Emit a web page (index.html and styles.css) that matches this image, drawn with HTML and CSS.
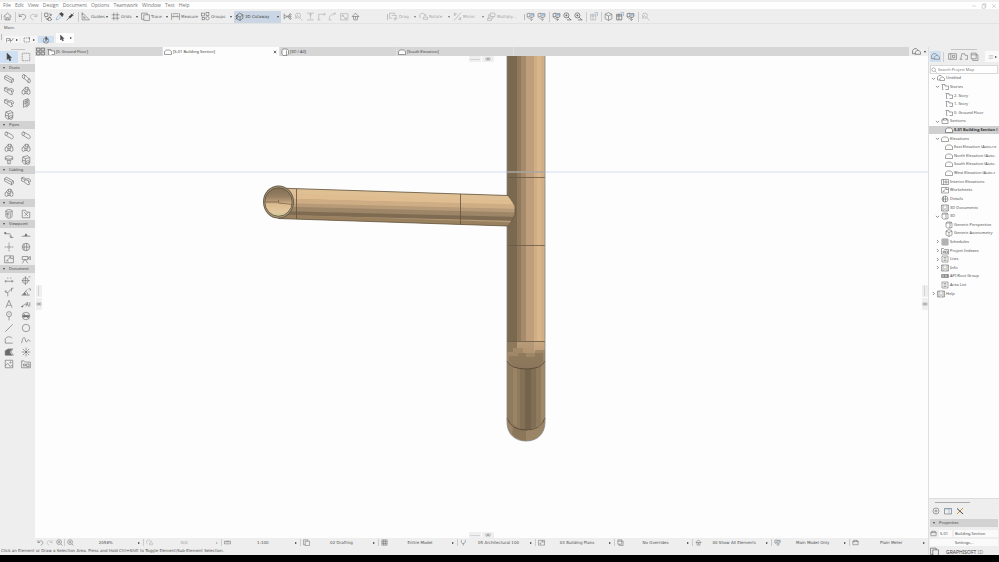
FILE: index.html
```html
<!DOCTYPE html>
<html lang="en">
<head>
<meta charset="utf-8">
<title>Untitled</title>
<link rel="stylesheet" href="styles.css">
</head>
<body>
<svg class="sprite" aria-hidden="true">
  <symbol id="home" viewBox="0 0 16 16"><path d="M1 8l7-6 7 6M3.500 7v7h9V7M6.500 14v-4h3v4"/></symbol>
  <symbol id="undo" viewBox="0 0 16 16"><path d="M2 3v5h5M2.500 8C5 3 13 3 13.500 8c.3 3-2 5-5 6"/></symbol>
  <symbol id="redo" viewBox="0 0 16 16"><path d="M14 3v5H9M13.500 8C11 3 3 3 2.500 8c-.3 3 2 5 5 6"/></symbol>
  <symbol id="find" viewBox="0 0 16 16"><rect x="1" y="2" width="6" height="6" rx="1"/><path d="M9 3l5 2-4 2M3 10l3 4 2-4M10 8l4 6M11 10a3 3 0 102 3"/></symbol>
  <symbol id="dropper" viewBox="0 0 16 16"><path class="blue" d="M2 14l1-4 6-6 3 3-6 6z"/><path class="solid" d="M8 3l5 5 2-4-3-3z"/></symbol>
  <symbol id="syringe" viewBox="0 0 16 16"><path class="solid" d="M5 9l5-5 2 2-5 5z"/><path d="M1 15l5-5M9 3l4 4M11 5l3-3"/></symbol>
  <symbol id="guides" viewBox="0 0 16 16"><path d="M2 1v13h13zM5 8v3h3zM1 4h3"/></symbol>
  <symbol id="grids" viewBox="0 0 16 16"><path d="M5 1v14M11 1v14M1 5h14M1 11h14"/></symbol>
  <symbol id="trace" viewBox="0 0 16 16"><path d="M5 13H1V2h10v3M5 5h10v10H5z"/></symbol>
  <symbol id="measure" viewBox="0 0 16 16"><path d="M1 2v12M15 2v12M3 8h10M5 6L3 8l2 2M11 6l2 2-2 2M3 3h10"/></symbol>
  <symbol id="groups" viewBox="0 0 16 16"><rect x="1" y="2" width="5" height="5"/><rect x="9" y="1" width="5" height="5"/><rect x="2" y="10" width="4" height="4"/><circle cx="11.500" cy="11" r="3"/></symbol>
  <symbol id="cutaway" viewBox="0 0 16 16"><path d="M3 6l5-4 6 3v6l-5 4-6-3zM3 6l6 3 5-4M9 9v6M1 9l4-4M1 13l5-4"/></symbol>
  <symbol id="scissors" viewBox="0 0 16 16"><path d="M2 3v10M2 5l10 6M2 11l10-6M9 8h6"/><circle cx="13" cy="4.500" r="1.500"/><circle cx="13" cy="11.500" r="1.500"/></symbol>
  <symbol id="lens" viewBox="0 0 16 16"><circle cx="7" cy="6.500" r="4.500"/><path d="M10 10l5 5M2 12l4-6 3 3"/></symbol>
  <symbol id="adjust" viewBox="0 0 16 16"><path d="M2 2h12M8 3v9M2 14h12M6 6l2-3 2 3"/></symbol>
  <symbol id="corner" viewBox="0 0 16 16"><path d="M3 14V4h11M6 14H1M12 2l3 2-3 2"/></symbol>
  <symbol id="fillet" viewBox="0 0 16 16"><path d="M2 14c0-7 4-11 12-12M2 14h4M10 6l4-4"/></symbol>
  <symbol id="resize" viewBox="0 0 16 16"><path d="M1 3h13v11H1zM4 6l7 6M4 9V6h3M8 12h3V9"/></symbol>
  <symbol id="explode" viewBox="0 0 16 16"><path d="M2 8l6-6 6 6zM4 8l1 6h6l1-6M8 8v4"/></symbol>
  <symbol id="drag" viewBox="0 0 16 16"><path d="M5 11H1V2h9v3M5 6h8v4M11 9v6M8 12h7"/></symbol>
  <symbol id="rotate" viewBox="0 0 16 16"><path d="M3 11a5 5 0 118-5M8 9h7v4H8zM9 5l2 2 2-3"/></symbol>
  <symbol id="mirror" viewBox="0 0 16 16"><path d="M14 1L2 15M2 2l4 1-3 4zM14 14l-4-1 3-4z"/></symbol>
  <symbol id="multiply" viewBox="0 0 16 16"><path d="M6 2h8v6H6zM6 5H3v6h8V8M4 11H1v4h7v-3"/></symbol>
  <symbol id="stack" viewBox="0 0 16 16"><path d="M2 3l5-1v6L2 9zM8 3h6v5l-3 2-4-1M9 10v5l3-2M4 10l3 3"/><path class="blue" d="M9 4h4v3H9z"/></symbol>
  <symbol id="zoomin" viewBox="0 0 16 16"><circle cx="6" cy="6" r="4.500"/><path d="M9 9l5 5M4 6h4M6 4v4M7 14h8"/></symbol>
  <symbol id="magnify" viewBox="0 0 16 16"><circle cx="7" cy="7" r="5.500"/><path d="M11 11l4 4M4.500 7h5M7 4.500v5"/></symbol>
  <symbol id="cube" viewBox="0 0 16 16"><path d="M2 4l6-3 6 3v8l-6 3-6-3zM2 4l6 3 6-3M8 7v8"/></symbol>
  <symbol id="solidbox" viewBox="0 0 16 16"><path class="paper" d="M2 5l2-3h8l3 3v7l-3 3H4l-2-3z"/><path d="M11 5v9"/></symbol>
  <symbol id="docblue" viewBox="0 0 16 16"><path d="M3 4h9v10H3zM3 7h9M7 4v10"/><path class="blue" d="M10 1h5v6"/></symbol>
  <symbol id="arrow" viewBox="0 0 16 16"><path class="solid" d="M5 2v10l2-2 2 4 2-1-2-4h3z"/></symbol>
  <symbol id="marquee" viewBox="0 0 16 16"><path stroke-dasharray="2 1" d="M2 2h12v12H2z"/></symbol>
  <symbol id="geom" viewBox="0 0 16 16"><path d="M1 13V5h6v4H3M9 13V5M9 9h3l3-5"/></symbol>
  <symbol id="box" viewBox="0 0 16 16"><path stroke-dasharray="3 1" d="M2 4h11v8H2z"/><path d="M11 2l3 2-2 2"/></symbol>
  <symbol id="compass" viewBox="0 0 16 16"><circle cx="8" cy="9" r="5.500"/><path class="solid" d="M8 1l3 6H7z"/><path d="M5 13l3-5 3 5"/></symbol>
  <symbol id="quad" viewBox="0 0 16 16"><path d="M1 2h6v5H1zM9 2h6v5H9zM1 9h6v5H1zM9 9h6v5H9z"/></symbol>
  <symbol id="story" viewBox="0 0 16 16"><path class="paper" d="M3 14V6h12v8z" stroke="none"/><path d="M5 13H3V3H1M3 3h5v3h7v7H9"/></symbol>
  <symbol id="house" viewBox="0 0 16 16"><path class="paper" d="M1 13V7l4-3h6l4 3v6z"/></symbol>
  <symbol id="houses" viewBox="0 0 16 16"><path d="M1 12V6l3-3h4l2 2M6 13V9l3-3h3l3 3v4zM1 12h5"/></symbol>
  <symbol id="section" viewBox="0 0 16 16"><path d="M2 13V6h12v7zM1 6l4-3h6l4 3M5 3v3M11 3v3"/></symbol>
  <symbol id="duct" viewBox="0 0 16 16"><path d="M1 4l3-2 11 6v4l-3 2L1 8zM1 4l11 6v4M12 10l3-2"/></symbol>
  <symbol id="bend" viewBox="0 0 16 16"><ellipse cx="4" cy="4" rx="2" ry="3"/><path d="M4 1c4 0 5 5 10 7M4 7c3 0 5 5 8 7"/><ellipse cx="13" cy="11" rx="2" ry="3"/></symbol>
  <symbol id="tee" viewBox="0 0 16 16"><path d="M1 3l3-1 4 3 4-1 3 2v3l-3 1 2 3-3 1-7-5-3-1zM1 3l5 3 6 1M6 6v3M12 7v3"/></symbol>
  <symbol id="joint" viewBox="0 0 16 16"><ellipse cx="4" cy="10" rx="2.500" ry="3.500"/><ellipse cx="12" cy="10" rx="2.500" ry="3.500"/><path d="M3 7l4-5h4l3 5M7 2v4h4V2M6 9h4M6 12h4"/></symbol>
  <symbol id="plate" viewBox="0 0 16 16"><path d="M4 4l7-3v10l-7 4zM4 7l7-3M4 10l7-3M8 2v10M11 2l2 1v8l-5 4"/></symbol>
  <symbol id="pipe" viewBox="0 0 16 16"><ellipse cx="3.500" cy="4.500" rx="2" ry="3"/><path d="M4 1.500l9 5M4 7.500l8 5M13 6.500c3 2 2 6-1 6"/></symbol>
  <symbol id="flange" viewBox="0 0 16 16"><path d="M2 3c4-2 8-2 12 0v4c-4 2-8 2-12 0zM6 8v6h4V8M2 5c4 2 8 2 12 0"/></symbol>
  <symbol id="device" viewBox="0 0 16 16"><path d="M3 3l8-2 3 3v7l-8 4-4-4zM3 3l4 3 7-2M7 6v8M2 9h5"/><circle cx="11" cy="12" r="3"/></symbol>
  <symbol id="tank" viewBox="0 0 16 16"><ellipse cx="8" cy="3" rx="5" ry="2"/><path d="M3 3v8c0 5 10 5 10 0V3M6 6v7M10 6v7M3 8h5"/></symbol>
  <symbol id="frame" viewBox="0 0 16 16"><path d="M2 14V2h5l2 3h5v9zM5 5l6 6M11 6l-5 5"/></symbol>
  <symbol id="sect" viewBox="0 0 16 16"><path class="solid" d="M1 4h2v2H1z"/><path d="M3 6h7M10 7v5h5M12 9v3"/></symbol>
  <symbol id="elev" viewBox="0 0 16 16"><path d="M1 10h14"/><path class="solid" d="M6 9l2-3 2 3z"/></symbol>
  <symbol id="interior" viewBox="0 0 16 16"><circle cx="8" cy="8" r="2"/><path d="M8 1v3M8 12v3M1 8h3M12 8h3"/></symbol>
  <symbol id="ball" viewBox="0 0 16 16"><circle cx="8" cy="8" r="6"/><path d="M2 8h12M5 3v10M9 2v12"/></symbol>
  <symbol id="sheet" viewBox="0 0 16 16"><path d="M1 3h14v11H1zM4 11l6-6M4 11h3M10 3v4h5"/></symbol>
  <symbol id="camera" viewBox="0 0 16 16"><path d="M2 4h9v5H2zM11 6l4-2v5l-4-2M6 9l-4 6M7 9l4 6"/></symbol>
  <symbol id="dim" viewBox="0 0 16 16"><path d="M1 10h14M3 8v4M13 8v4M5 5h2M10 5h2"/></symbol>
  <symbol id="target" viewBox="0 0 16 16"><circle cx="7" cy="9" r="4.500"/><path d="M7 2v14M1 9h13M12 3h3"/></symbol>
  <symbol id="radial" viewBox="0 0 16 16"><path d="M1 7l5 2 6-6M6 9v6M3 5v4M12 7V2h3"/></symbol>
  <symbol id="angle" viewBox="0 0 16 16"><path d="M1 13h13M2 13l8-9M7 7c3 1 4 3 4 6M12 3h3v3"/><path class="solid" d="M4 12l2-3 2 3z"/></symbol>
  <symbol id="letter" viewBox="0 0 16 16"><path d="M3 14L8 2l5 12M5 10h6"/></symbol>
  <symbol id="label" viewBox="0 0 16 16"><path d="M2 12l4-4h2M8 12l2-7 2 7M9 9h2M14 5v7"/><circle class="solid" cx="2" cy="12" r="1"/></symbol>
  <symbol id="pin" viewBox="0 0 16 16"><circle cx="8" cy="5" r="4"/><path d="M8 9v6M8 4v2"/></symbol>
  <symbol id="change" viewBox="0 0 16 16"><circle cx="8" cy="8" r="6"/><path class="solid" d="M3 7h10l-1 3-4-1-4 1z"/><path d="M4 4l8 8"/></symbol>
  <symbol id="line" viewBox="0 0 16 16"><path d="M2 14L14 2"/></symbol>
  <symbol id="circle" viewBox="0 0 16 16"><circle cx="8" cy="8" r="6"/></symbol>
  <symbol id="poly" viewBox="0 0 16 16"><path d="M2 13V6c3-4 8-4 11-1M2 13h12"/></symbol>
  <symbol id="spline" viewBox="0 0 16 16"><path d="M1 13C3 2 6 2 7 8s3 2 4 0 2 2 4 2"/></symbol>
  <symbol id="fill" viewBox="0 0 16 16"><path class="solid" d="M2 13V6l5-3 5 1-3 4 3 5z"/><path d="M10 3h4l-3 5 4 5h-4"/></symbol>
  <symbol id="sun" viewBox="0 0 16 16"><circle class="solid" cx="8" cy="8" r="1.500"/><path d="M8 1v4M8 11v4M1 8h4M11 8h4M3 3l3 3M10 10l3 3M13 3l-3 3M6 10l-3 3"/></symbol>
  <symbol id="image" viewBox="0 0 16 16"><path d="M2 2h12v12H2zM2 11l4-4 4 5 2-2 2 2"/><circle cx="10.500" cy="5.500" r="1"/></symbol>
  <symbol id="drawing" viewBox="0 0 16 16"><path d="M1 14V3h4l2 2h8v9zM4 8h3v3H4zM9 8h4v4H9z"/></symbol>
  <symbol id="book" viewBox="0 0 16 16"><path d="M1 3h14v10H1zM5 3v10M8 6h4v4H8z"/></symbol>
  <symbol id="layouts" viewBox="0 0 16 16"><path d="M3 13L5 3h5l1 3h4v7h-4M1 13h5"/></symbol>
  <symbol id="publish" viewBox="0 0 16 16"><path d="M2 2h9v10H2zM5 12v3h9V5h-3M2 5h9"/></symbol>
  <symbol id="table" viewBox="0 0 16 16"><path d="M2 2h12v12H2zM2 6h12M2 10h12M6 2v12M10 2v12"/></symbol>
  <symbol id="list" viewBox="0 0 16 16"><path d="M2 2h12v12H2zM5 5h6M5 8h6M5 11h6"/></symbol>
  <symbol id="lines" viewBox="0 0 16 16"><path d="M2 4h12M2 8h12M2 12h12"/></symbol>
  <symbol id="info" viewBox="0 0 16 16"><path d="M1 2h14v12H1zM4 2v12M12 2v12M8 5v1M8 8v4"/></symbol>
  <symbol id="root" viewBox="0 0 16 16"><path d="M1 5h14v6H1zM4 5v6M7 5v6M10 5v6M13 5v6M1 8h14"/></symbol>
  <symbol id="prism" viewBox="0 0 16 16"><path d="M2 4l3-2h6l3 2v9l-3 1H5l-3-2zM10 4v10M2 4h8l4-1"/></symbol>
  <symbol id="chevd" viewBox="0 0 16 16"><path d="M3 6l5 5 5-5"/></symbol>
  <symbol id="chevr" viewBox="0 0 16 16"><path d="M6 3l5 5-5 5"/></symbol>
  <symbol id="plus" viewBox="0 0 16 16"><circle cx="8" cy="8" r="6"/><path d="M8 5v6M5 8h6"/></symbol>
  <symbol id="window" viewBox="0 0 16 16"><path d="M1 3h14v11H1z"/><path class="blue" d="M1 4h14M10 4v10"/></symbol>
  <symbol id="delete" viewBox="0 0 16 16"><path class="gold" d="M14 2L2 14"/><path d="M2 3l12 11" stroke-width="2"/></symbol>
  <symbol id="search" viewBox="0 0 16 16"><circle cx="7" cy="7" r="5"/><path d="M11 11l4 4"/></symbol>
  <symbol id="close" viewBox="0 0 16 16"><path d="M3 3l10 10M13 3L3 13"/></symbol>
  <symbol id="min" viewBox="0 0 16 16"><path d="M3 8h10"/></symbol>
  <symbol id="restore" viewBox="0 0 16 16"><path d="M3 5h8v9H3zM5 5V2h8v9h-2"/></symbol>
  <symbol id="scale" viewBox="0 0 16 16"><path d="M1 5h14v6H1zM5 5v3M8 5v3M11 5v3"/></symbol>
  <symbol id="pen" viewBox="0 0 16 16"><path d="M3 2v4c0 6 9 6 9 0V2M7.500 10v5"/></symbol>
  <symbol id="spread" viewBox="0 0 16 16"><path d="M0 8h16M4 3l8 10M12 3L4 13" stroke-width="2"/></symbol>
</svg>

<header>
  <div class="menubar">
    <nav class="menus">
      <a href="#">File</a><a href="#">Edit</a><a href="#">View</a><a href="#">Design</a><a href="#">Document</a><a href="#">Options</a><a href="#">Teamwork</a><a href="#">Window</a><a href="#">Text</a><a href="#">Help</a>
    </nav>
    <div class="window-buttons">
      <button aria-label="Minimize"><svg><use href="#min"/></svg></button>
      <button aria-label="Restore"><svg><use href="#restore"/></svg></button>
      <button aria-label="Close"><svg><use href="#close"/></svg></button>
    </div>
  </div>

  <div class="toolbar">
    <i class="handle"></i>
    <button class="tool" aria-label="Home"><svg><use href="#home"/></svg></button>
    <i class="sep"></i>
    <button class="tool" aria-label="Undo"><svg><use href="#undo"/></svg></button>
    <button class="tool off" aria-label="Redo"><svg><use href="#redo"/></svg></button>
    <i class="sep"></i>
    <button class="tool dark" aria-label="Find and select"><svg><use href="#find"/></svg></button>
    <button class="tool dark" aria-label="Pick up"><svg><use href="#dropper"/></svg></button>
    <button class="tool dark" aria-label="Inject"><svg><use href="#syringe"/></svg></button>
    <i class="sep"></i>
    <button class="tool wide"><svg><use href="#guides"/></svg>Guides<b class="down"></b></button>
    <button class="tool wide"><svg><use href="#grids"/></svg>Grids<b class="down"></b></button>
    <button class="tool wide"><svg><use href="#trace"/></svg>Trace<b class="down"></b></button>
    <button class="tool wide"><svg><use href="#measure"/></svg>Measure</button>
    <button class="tool wide groups"><svg><use href="#groups"/></svg>Groups<b class="down"></b></button>
    <button class="tool wide cutaway"><svg><use href="#cutaway"/></svg>3D Cutaway<b class="down"></b></button>
    <div class="tool-group">
      <button class="tool" aria-label="Split"><svg><use href="#scissors"/></svg></button>
      <button class="tool off" aria-label="Trim"><svg><use href="#lens"/></svg></button>
      <button class="tool off" aria-label="Adjust"><svg><use href="#adjust"/></svg></button>
      <button class="tool off" aria-label="Intersect"><svg><use href="#corner"/></svg></button>
      <button class="tool off" aria-label="Fillet"><svg><use href="#fillet"/></svg></button>
      <button class="tool off" aria-label="Resize"><svg><use href="#resize"/></svg></button>
      <button class="tool" aria-label="Explode"><svg><use href="#explode"/></svg></button>
    </div>
    <div class="edit-tools">
      <i class="handle"></i>
      <button class="tool wide off"><svg><use href="#drag"/></svg>Drag<b class="down"></b></button>
      <button class="tool wide off groups"><svg><use href="#rotate"/></svg>Rotate<b class="down"></b></button>
      <button class="tool wide off groups"><svg><use href="#mirror"/></svg>Mirror<b class="down"></b></button>
      <button class="tool wide off multiply"><svg><use href="#multiply"/></svg>Multiply...</button>
      <i class="handle"></i>
      <button class="tool" aria-label="Send"><svg><use href="#stack"/></svg></button>
      <button class="tool" aria-label="Receive"><svg><use href="#stack"/></svg></button>
      <i class="sep"></i>
      <button class="tool dark" aria-label="Show all"><svg><use href="#stack"/></svg></button>
      <button class="tool dark" aria-label="Zoom to selection"><svg><use href="#zoomin"/></svg></button>
      <button class="tool dark" aria-label="Zoom out"><svg><use href="#zoomin"/></svg></button>
      <i class="sep"></i>
      <button class="tool off" aria-label="Layers"><svg><use href="#docblue"/></svg></button>
      <i class="sep"></i>
      <button class="tool" aria-label="Surface"><svg><use href="#cube"/></svg></button>
      <button class="tool dark" aria-label="Update"><svg><use href="#docblue"/></svg></button>
      <button class="tool dark" aria-label="Model check"><svg><use href="#stack"/></svg></button>
      <i class="sep"></i>
      <button class="tool off" aria-label="Inspect"><svg><use href="#lens"/></svg></button>
    </div>
  </div>

  <div class="infobox">
    <span class="infobox-title">Main:</span>
    <div class="infobox-row">
      <i class="handle"></i>
      <button class="choice"><svg><use href="#geom"/></svg><b class="right"></b></button>
      <button class="choice"><svg><use href="#box"/></svg><b class="right"></b></button>
      <button class="choice active" aria-label="Quick selection"><svg><use href="#compass"/></svg></button>
      <button class="choice tall"><svg><use href="#arrow"/></svg><b class="right"></b></button>
    </div>
  </div>
</header>

<main>
  <div class="left-part">
    <div class="workspace">
      <aside class="toolbox">
        <i class="grip"></i>
        <div class="tools select-tools">
          <button class="active" aria-label="Arrow"><svg><use href="#arrow"/></svg></button>
          <button aria-label="Marquee"><svg><use href="#marquee"/></svg></button>
        </div>
        <h2><b class="down"></b>Ducts</h2>
        <div class="tools">
          <button aria-label="Duct"><svg><use href="#duct"/></svg></button><button aria-label="Duct bend"><svg><use href="#bend"/></svg></button>
          <button aria-label="Duct transition"><svg><use href="#tee"/></svg></button><button aria-label="Duct junction"><svg><use href="#joint"/></svg></button>
          <button aria-label="Duct inline"><svg><use href="#tee"/></svg></button><button aria-label="Duct terminal"><svg><use href="#plate"/></svg></button>
          <button aria-label="Duct equipment"><svg><use href="#device"/></svg></button>
        </div>
        <h2><b class="down"></b>Pipes</h2>
        <div class="tools">
          <button aria-label="Pipe"><svg><use href="#pipe"/></svg></button><button aria-label="Flexible pipe"><svg><use href="#pipe"/></svg></button>
          <button aria-label="Pipe bend"><svg><use href="#joint"/></svg></button><button aria-label="Pipe junction"><svg><use href="#joint"/></svg></button>
          <button aria-label="Pipe terminal"><svg><use href="#flange"/></svg></button><button aria-label="Pipe equipment"><svg><use href="#device"/></svg></button>
        </div>
        <h2><b class="down"></b>Cabling</h2>
        <div class="tools">
          <button aria-label="Cable carrier"><svg><use href="#duct"/></svg></button><button aria-label="Cable junction"><svg><use href="#tee"/></svg></button>
          <button aria-label="Cable transition"><svg><use href="#joint"/></svg></button>
        </div>
        <h2><b class="down"></b>General</h2>
        <div class="tools">
          <button aria-label="Equipment"><svg><use href="#tank"/></svg></button><button aria-label="Opening"><svg><use href="#frame"/></svg></button>
        </div>
        <h2><b class="down"></b>Viewpoint</h2>
        <div class="tools">
          <button aria-label="Section"><svg><use href="#sect"/></svg></button><button aria-label="Elevation"><svg><use href="#elev"/></svg></button>
          <button aria-label="Interior elevation"><svg><use href="#interior"/></svg></button><button aria-label="Detail"><svg><use href="#ball"/></svg></button>
          <button aria-label="Worksheet"><svg><use href="#sheet"/></svg></button><button aria-label="Camera"><svg><use href="#camera"/></svg></button>
        </div>
        <h2><b class="down"></b>Document</h2>
        <div class="tools">
          <button aria-label="Dimension"><svg><use href="#dim"/></svg></button><button aria-label="Level dimension"><svg><use href="#target"/></svg></button>
          <button aria-label="Radial dimension"><svg><use href="#radial"/></svg></button><button aria-label="Angle dimension"><svg><use href="#angle"/></svg></button>
          <button aria-label="Text"><svg><use href="#letter"/></svg></button><button aria-label="Label"><svg><use href="#label"/></svg></button>
          <button aria-label="Grid element"><svg><use href="#pin"/></svg></button><button aria-label="Change"><svg><use href="#change"/></svg></button>
          <button aria-label="Line"><svg><use href="#line"/></svg></button><button aria-label="Circle"><svg><use href="#circle"/></svg></button>
          <button aria-label="Polyline"><svg><use href="#poly"/></svg></button><button aria-label="Spline"><svg><use href="#spline"/></svg></button>
          <button aria-label="Fill"><svg><use href="#fill"/></svg></button><button aria-label="Hotspot"><svg><use href="#sun"/></svg></button>
          <button aria-label="Figure"><svg><use href="#image"/></svg></button><button aria-label="Drawing"><svg><use href="#drawing"/></svg></button>
        </div>
      </aside>

      <section class="center">
        <div class="tabs">
          <button class="tab-grid" aria-label="Tab overview"><svg><use href="#quad"/></svg></button>
          <button class="tab"><svg><use href="#story"/></svg>[0. Ground Floor]</button>
          <button class="tab current"><svg><use href="#house"/></svg>[S-01 Building Section]<svg class="tab-close"><use href="#close"/></svg></button>
          <button class="tab"><svg><use href="#solidbox"/></svg>[3D / All]</button>
          <button class="tab"><svg><use href="#house"/></svg>[South Elevation]</button>
          <i class="tab-fill"></i>
          <button class="tab-nav" aria-label="Tab navigation"><svg><use href="#houses"/></svg><b class="down"></b></button>
        </div>

        <div class="canvas">
          <svg class="model" viewBox="35 56 893 482" preserveAspectRatio="xMinYMin meet">
            <defs>
              <linearGradient id="mouth" x1="0" y1="0" x2="0" y2="1">
                <stop offset="0" stop-color="#826e54"/><stop offset=".3" stop-color="#957e61"/><stop offset=".48" stop-color="#b99b77"/>
                <stop offset=".58" stop-color="#dcbb90"/><stop offset=".85" stop-color="#e3c99e"/><stop offset="1" stop-color="#c3c796"/>
              </linearGradient>
              <linearGradient id="bendShade" x1="0" y1="0" x2="0" y2="1">
                <stop offset="0" stop-color="#8c775a" stop-opacity="0"/><stop offset="1" stop-color="#7d6a50"/>
              </linearGradient>
              <clipPath id="branchClip"><path d="M278 188L508 195.500Q511 199 515 206v8Q512 222 508 226L278 218.500z"/></clipPath>
            </defs>
            <path d="M35 172H928" stroke="#eaedf6" stroke-width="2"/>
            <g>
              <path d="M507 56h38v310h-38z" fill="#d2ae86"/>
              <path d="M507 56h27v290h-27z" fill="#bf9f7b"/>
              <path d="M507 56h19v290h-19z" fill="#a58b6c"/>
              <path d="M507 56h14v290h-14z" fill="#8f7a5e"/>
              <path d="M507 56h10v290h-10z" fill="#7a684f"/>
              <path d="M537 56h4v285h-4z" fill="#d9b58c"/>
              <path d="M507 341h38v20q-4 8-19 8t-19-8z" fill="#b89b78"/>
              <path d="M507 341h10v24l-10-5z" fill="#8d785c"/>
              <path d="M534 341h11v11h-11z" fill="#caa882"/>
              <path d="M513 348h10v5h12v-3h10v11q-4 8-19 8t-19-8v-9h6z" fill="#a68c6c"/>
              <path d="M509 356h9v-3h8v4h9v-4h8v8q-6 8-17 8t-17-8z" fill="#927c60"/>
              <path d="M507 341h38v20q-4 8-19 8t-19-8z" fill="url(#bendShade)" opacity=".4"/>
              <path d="M507 361q4 8 19 8t19-8v57q-4 11-19 12t-19-12z" fill="#8f7a5d"/>
              <path d="M513 366l4 2v59l-4-4z" fill="#9b8466"/>
              <path d="M520 368l5 1v61l-5-1z" fill="#847055"/>
              <path d="M525 369h6v60l-6 1z" fill="#75644c"/>
              <path d="M531 369l5-1v59l-5 2z" fill="#826e54"/>
              <path d="M541 365l4-4v57l-4 6z" fill="#a0896a"/>
              <path d="M507 418q4 12 19 12t19-12v4c0 12-8 19-19 19s-19-7-19-19z" fill="#9c8466"/>
              <path d="M513 427l13 3v11q-9-1-14-7z" fill="#8c765a"/>
              <path d="M507 177.500h38M507 245.500h38M507 341.500h38" stroke="#695a44" stroke-width=".8" fill="none"/>
              <path d="M507 361q4 8 19 8t19-8M507 418q4 12 19 12t19-12" stroke="#5b4d3a" fill="none"/>
              <path d="M507 56v366c0 12 8 19 19 19s19-7 19-19V56" stroke="#85857f" stroke-width=".8" fill="none"/>
              <path d="M507 172h38" stroke="#aaa6a0" stroke-width="1.500"/>
            </g>
            <g fill="none" clip-path="url(#branchClip)">
              <path d="M278 187h240v40H278z" fill="#b79a77"/>
              <path d="M275 191l243 8" stroke="#dfbf94" stroke-width="6"/>
              <path d="M275 196l243 7" stroke="#e0bd91" stroke-width="5"/>
              <path d="M275 201l243 6" stroke="#ceac84" stroke-width="5"/>
              <path d="M275 205l243 6" stroke="#b79a77" stroke-width="4"/>
              <path d="M275 209l243 6" stroke="#9d8567" stroke-width="5"/>
              <path d="M275 213l243 6" stroke="#7e6b52" stroke-width="4"/>
              <path d="M275 217l243 8" stroke="#99815f" stroke-width="5"/>
            </g>
            <path d="M282 188.200L508 195.500Q511 199 515 206v8Q512 222 508 226L278 218.500" stroke="#655843" stroke-width=".8" fill="none"/>
            <path d="M296.500 189v30M460.500 194v30" stroke="#62533e" stroke-width=".8"/>
            <ellipse cx="278.500" cy="202" rx="15.500" ry="16.500" fill="#69604f"/>
            <ellipse cx="278.500" cy="202" rx="14.500" ry="15.500" fill="#b59b77"/>
            <ellipse cx="278.500" cy="202" rx="13.700" ry="14.300" fill="url(#mouth)" stroke="#59503f" stroke-width=".8"/>
            <path d="M278.500 200v3l14.500 1.500M265 202h13" stroke="#6f5b43" stroke-width=".7" fill="none"/>
          </svg>
          <div class="handle-pad pad-top"><i></i><svg><use href="#spread"/></svg></div>
          <div class="handle-pad pad-bottom"><i></i><svg><use href="#spread"/></svg></div>
          <div class="handle-pad pad-left"><i></i><svg><use href="#spread"/></svg></div>
          <div class="handle-pad pad-right"><i></i><svg><use href="#spread"/></svg></div>
        </div>

        <div class="options">
          <div class="zooms">
            <button aria-label="Previous zoom"><svg><use href="#undo"/></svg></button>
            <button class="off" aria-label="Next zoom"><svg><use href="#redo"/></svg></button>
            <button aria-label="Zoom in"><svg><use href="#magnify"/></svg></button>
          </div>
          <button class="option"><svg><use href="#magnify"/></svg><span>2058%</span><b class="right"></b></button>
          <button class="option off"><svg><use href="#rotate"/></svg><span>N/A</span><b class="right"></b></button>
          <button class="option"><svg><use href="#scale"/></svg><span>1:100</span><b class="right"></b></button>
          <button class="option"><svg><use href="#trace"/></svg><span>02 Drafting</span><b class="right"></b></button>
          <button class="option"><svg><use href="#table"/></svg><span>Entire Model</span><b class="right"></b></button>
          <button class="option"><svg><use href="#pen"/></svg><span>05 Architectural 100</span><b class="right"></b></button>
          <button class="option"><svg><use href="#sheet"/></svg><span>03 Building Plans</span><b class="right"></b></button>
          <button class="option"><svg><use href="#publish"/></svg><span>No Overrides</span><b class="right"></b></button>
          <button class="option"><svg><use href="#explode"/></svg><span>00 Show All Elements</span><b class="right"></b></button>
          <button class="option"><svg><use href="#stack"/></svg><span>Main Model Only</span><b class="right"></b></button>
          <button class="option"><svg><use href="#section"/></svg><span>Plain Meter</span><b class="right"></b></button>
        </div>
      </section>
    </div>
    <p class="status">Click an Element or Draw a Selection Area. Press and Hold Ctrl+Shift to Toggle Element/Sub-Element Selection.</p>
  </div>

  <aside class="navigator">
    <div class="nav-tabs">
      <i class="grip"></i>
      <button class="active" aria-label="Project map"><svg><use href="#houses"/></svg></button>
      <i class="sep"></i>
      <button aria-label="View map"><svg><use href="#book"/></svg></button>
      <button aria-label="Layout book"><svg><use href="#layouts"/></svg></button>
      <button aria-label="Publisher"><svg><use href="#publish"/></svg></button>
      <button class="nav-menu" aria-label="Navigator menu"><svg><use href="#lines"/></svg><b class="right"></b></button>
    </div>
    <label class="search"><svg><use href="#search"/></svg><input type="text" placeholder="Search Project Map" aria-label="Search Project Map"></label>
    <div class="tree-pane">
      <ul class="tree">
        <li><svg class="chev"><use href="#chevd"/></svg><svg><use href="#houses"/></svg>Untitled</li>
        <li class="l1"><svg class="chev"><use href="#chevd"/></svg><svg><use href="#story"/></svg>Stories</li>
        <li class="l2"><svg><use href="#story"/></svg>2. Story</li>
        <li class="l2"><svg><use href="#story"/></svg>1. Story</li>
        <li class="l2"><svg><use href="#story"/></svg>0. Ground Floor</li>
        <li class="l1"><svg class="chev"><use href="#chevd"/></svg><svg><use href="#section"/></svg>Sections</li>
        <li class="l2 selected"><svg><use href="#house"/></svg>S-01 Building Section (</li>
        <li class="l1"><svg class="chev"><use href="#chevd"/></svg><svg><use href="#house"/></svg>Elevations</li>
        <li class="l2"><svg><use href="#house"/></svg>East Elevation (Auto-re</li>
        <li class="l2"><svg><use href="#house"/></svg>North Elevation (Auto-</li>
        <li class="l2"><svg><use href="#house"/></svg>South Elevation (Auto-</li>
        <li class="l2"><svg><use href="#house"/></svg>West Elevation (Auto-r</li>
        <li class="l1"><i class="chev"></i><svg><use href="#book"/></svg>Interior Elevations</li>
        <li class="l1"><i class="chev"></i><svg><use href="#sheet"/></svg>Worksheets</li>
        <li class="l1"><i class="chev"></i><svg><use href="#ball"/></svg>Details</li>
        <li class="l1"><i class="chev"></i><svg><use href="#info"/></svg>3D Documents</li>
        <li class="l1"><svg class="chev"><use href="#chevd"/></svg><svg><use href="#prism"/></svg>3D</li>
        <li class="l2"><svg><use href="#prism"/></svg>Generic Perspective</li>
        <li class="l2"><svg><use href="#cube"/></svg>Generic Axonometry</li>
        <li class="l1"><svg class="chev"><use href="#chevr"/></svg><svg><use href="#table"/></svg>Schedules</li>
        <li class="l1"><svg class="chev"><use href="#chevr"/></svg><svg><use href="#drawing"/></svg>Project Indexes</li>
        <li class="l1"><svg class="chev"><use href="#chevr"/></svg><svg><use href="#list"/></svg>Lists</li>
        <li class="l1"><svg class="chev"><use href="#chevr"/></svg><svg><use href="#info"/></svg>Info</li>
        <li class="l1"><i class="chev"></i><svg><use href="#root"/></svg>API Root Group</li>
        <li class="l1"><i class="chev"></i><svg><use href="#list"/></svg>Area List</li>
        <li><svg class="chev"><use href="#chevr"/></svg><svg><use href="#info"/></svg>Help</li>
      </ul>
    </div>
    <div class="properties">
      <i class="grip"></i>
      <div class="prop-actions">
        <button aria-label="New viewpoint"><svg><use href="#plus"/></svg></button>
        <button aria-label="Viewpoint window"><svg><use href="#window"/></svg></button>
        <button class="dark" aria-label="Delete viewpoint"><svg><use href="#delete"/></svg></button>
      </div>
      <h2><b class="down"></b>Properties</h2>
      <div class="prop-fields">
        <svg><use href="#section"/></svg>
        <input class="prop-id" type="text" value="S-01" aria-label="ID">
        <input class="prop-name" type="text" value="Building Section" aria-label="Name">
      </div>
      <button class="settings">Settings...</button>
      <div class="brand"><svg><use href="#trace"/></svg><span>GRAPHISOFT <em>ID</em></span></div>
    </div>
  </aside>
</main>
<footer></footer>
</body>
</html>
```
FILE: styles.css
```css
* { box-sizing: border-box; }

body {
  margin: 0;
  height: 100vh;
  display: flex;
  flex-direction: column;
  overflow: hidden;
  background: #eee;
  color: #505050;
  font: 4px/6px "Noto Sans", "Open Sans", sans-serif;
}

button, input {
  margin: 0;
  padding: 0;
  border: 0;
  background: none;
  color: inherit;
  font: inherit;
}

button {
  display: flex;
  align-items: center;
  justify-content: center;
  flex: none;
  white-space: nowrap;
}

h2, p, ul { margin: 0; padding: 0; font-size: 4px; font-weight: 400; }

svg {
  flex: none;
  width: 9px;
  height: 9px;
  fill: none;
  stroke: currentColor;
  stroke-width: 1;
}

.sprite { position: absolute; width: 0; height: 0; }
.solid { fill: currentColor; }
.paper { fill: #fcfcfc; }
.blue { stroke: #6f9fd0; }
.gold { stroke: #c49335; stroke-width: 2; }
.off { color: #a4a4a4; }
.dark { color: #444; }

/* small triangles and dividers */
.down, .right { flex: none; width: 0; height: 0; border: 1px solid transparent; }
.down { border-width: 2px 1px 0; border-top-color: #444; }
.right { border-width: 1px 0 1px 2px; border-left-color: #333; }
.handle { flex: none; width: 1px; height: 6px; margin-left: 1px; background: #bbb; }
.sep { flex: none; width: 1px; height: 10px; margin: 0 1px 0 2px; background: #ccc; }
.grip { align-self: center; width: 14px; height: 1px; background: #c4c4c4; }

/* top bars */
.menubar {
  display: flex;
  justify-content: space-between;
  align-items: center;
  height: 9px;
  padding: 0 2px 0 3px;
  border-top: 2px solid #f0f0f0;
  background: #fefefe;
  color: #777;
}
.menus { display: flex; gap: 4px; font: 5px/7px "Open Sans", sans-serif; }
.menus a { color: inherit; text-decoration: none; }
.window-buttons { display: flex; gap: 4px; color: #999; }
.window-buttons svg { width: 6px; height: 6px; }

.toolbar, .options, .status { font-family: "DejaVu Sans", sans-serif; }

.toolbar {
  display: flex;
  align-items: center;
  height: 15px;
  padding-top: 1px;
  border-bottom: 1px solid #e2e2e2;
}
.tool { width: 11px; height: 12px; color: #666; }
.tool.dark { color: #444; }
.tool.off { color: #a4a4a4; }
.off .down { border-top-color: #777; }
.wide { width: auto; min-width: 30px; justify-content: flex-start; gap: 1px; padding: 0 2px 0 1px; }
.wide .down { margin-left: auto; }
.groups { min-width: 34px; }
.multiply { min-width: 37px; }
.cutaway { min-width: 47px; background: #cbd6e4; color: #444; }
.tool-group { display: flex; justify-content: space-between; width: 80px; padding-left: 1px; }
.edit-tools { display: flex; align-items: center; margin-left: 25px; }

.infobox { height: 23px; padding: 1px 0 0; }
.infobox-title { display: block; padding-left: 4px; }
.infobox-row { display: flex; align-items: flex-end; gap: 1px; height: 12px; }
.infobox-row .handle { align-self: center; margin-right: 1px; }
.choice { width: 16px; height: 7px; gap: 2px; background: #f6f6f6; }
.choice svg { width: 8px; height: 8px; }
.choice.active { background: #cfe0f2; }
.choice.tall { width: 18px; height: 10px; margin-left: 1px; gap: 4px; background: #fdfdfd; }

/* main split */
main { flex: 1; display: flex; min-height: 0; }
.left-part { flex: 1; min-width: 0; display: flex; flex-direction: column; }
.workspace { flex: 1; min-height: 0; display: flex; }
.status { height: 8px; padding: 1px 0 0 1px; color: #555; white-space: nowrap; }

.toolbox { flex: none; width: 35px; display: flex; flex-direction: column; padding-top: 2px; color: #6a6a6a; }
.tools { display: grid; grid-template-columns: 1fr 1fr; grid-auto-rows: 12px; }
.tools button { width: 100%; height: 100%; }
.tools svg { width: 10px; height: 10px; }
.select-tools { margin: 1px 0 1px; }
.select-tools .active { background: #cfe0f2; color: #444; }
.toolbox h2, .properties h2 {
  display: flex;
  align-items: center;
  gap: 4px;
  height: 8px;
  margin-bottom: 1px;
  padding-left: 3px;
  background: #d2d2d2;
  color: #444;
}

.center { flex: 1; min-width: 0; display: flex; flex-direction: column; }
.tabs { display: flex; height: 9px; background: #efefef; color: #444; }
.tab, .tab-grid, .tab-fill { background: #d6d6d6; }
.tab-grid { width: 11px; }
.tab { width: 117px; justify-content: flex-start; gap: 1px; padding-left: 1px; border-right: 1px solid #e0e0e0; }
.tab svg { width: 8px; height: 8px; }
.tab.current { background: #fdfdfd; }
.tab .tab-close { width: 4px; height: 4px; margin: 0 2px 0 auto; stroke-width: 3; }
.tab-fill { flex: 1; }
.tab-nav { width: 19px; gap: 3px; }

.canvas { position: relative; flex: 1; min-height: 0; background: #fdfdfd; }
.model { display: block; width: 100%; height: 100%; stroke: none; }
.handle-pad { position: absolute; display: flex; gap: 1px; color: #999; }
.handle-pad i { width: 12px; height: 6px; border: solid #efefef; border-width: 3px 1px 2px; background: #d4d4d4; }
.handle-pad svg { width: 12px; height: 6px; background: #efefef; }
.pad-top { top: 0; left: 434px; }
.pad-bottom { bottom: 0; left: 434px; }
.pad-left, .pad-right { top: 47.5%; flex-direction: column; }
.pad-left { left: 1px; }
.pad-right { right: 0; }
.pad-left i, .pad-right i { width: 6px; height: 12px; border-width: 1px 3px 1px 2px; }
.pad-left svg, .pad-right svg { width: 6px; height: 12px; }

.options { display: flex; align-items: center; height: 9px; }
.zooms { display: flex; justify-content: space-around; width: 29px; padding-left: 1px; }
.options svg { width: 7px; height: 7px; }
.option { flex: 1; min-width: 0; height: 7px; padding: 0 3px 0 2px; border-left: 1px solid #ccc; }
.option span { flex: 1; text-align: center; }
.option.off .right { border-left-color: #aaa; }

/* navigator */
.navigator { flex: none; width: 71px; display: flex; flex-direction: column; border-left: 1px solid #dedede; }
.nav-tabs { display: flex; flex-wrap: wrap; align-items: center; align-content: flex-start; height: 18px; padding: 2px 0 0 1px; color: #666; }
.nav-tabs .grip { flex: none; width: 26px; margin: 0 20px 1px 21px; }
.nav-tabs button { width: 11px; height: 11px; }
.nav-tabs .active { background: #cfe0f2; }
.nav-tabs .sep { margin-right: 3px; }
.nav-tabs .nav-menu { flex: 1; margin-left: 5px; gap: 1px; background: #fafafa; color: #999; }
.nav-menu svg { width: 6px; height: 6px; }
.search { display: flex; align-items: center; gap: 1px; height: 9px; margin: 0 1px; border: 1px solid #d8d8d8; background: #fff; }
.search svg { width: 6px; height: 6px; }
.search input { flex: 1; min-width: 0; height: 6px; outline: 0; }
.search input::placeholder { color: #777; opacity: 1; }

.tree-pane { flex: 1; min-height: 0; background: #fdfdfd; }
.tree { display: grid; grid-auto-rows: 1fr; height: 224px; list-style: none; }
.tree li { display: flex; align-items: center; gap: 1px; padding-left: 2px; white-space: nowrap; }
.tree li svg { width: 8px; height: 8px; }
.tree li .chev { flex: none; width: 5px; height: 5px; stroke-width: 2; }
.tree .l1 { padding-left: 6px; }
.tree .l2 { padding-left: 16px; }
.tree .selected { background: #d0d0d0; color: #333; font-family: "Open Sans", sans-serif; font-weight: 700; }

.properties { display: flex; flex-direction: column; height: 57px; padding: 3px 1px 0; border-top: 1px solid #ddd; }
.properties > * { flex: none; }
.properties .grip { align-self: flex-start; width: 35px; margin-left: 5px; background: #aaa; }
.prop-actions { display: flex; gap: 4px; height: 16px; padding-left: 2px; }
.prop-actions svg { width: 8px; height: 8px; }
.prop-fields { display: flex; align-items: center; gap: 2px; height: 11px; }
.prop-fields svg { width: 7px; height: 7px; }
.prop-fields input { height: 7px; padding: 0 1px; background: #fafafa; }
.prop-id { width: 13px; }
.prop-name { flex: 1; min-width: 0; }
.settings { height: 7px; background: #fafafa; }
.brand { display: flex; align-items: center; gap: 7px; height: 9px; margin-top: 1px; color: #444; font-size: 5px; }
.brand em { color: #888; font-style: normal; }

footer { flex: none; height: 7px; background: #000; }
```
